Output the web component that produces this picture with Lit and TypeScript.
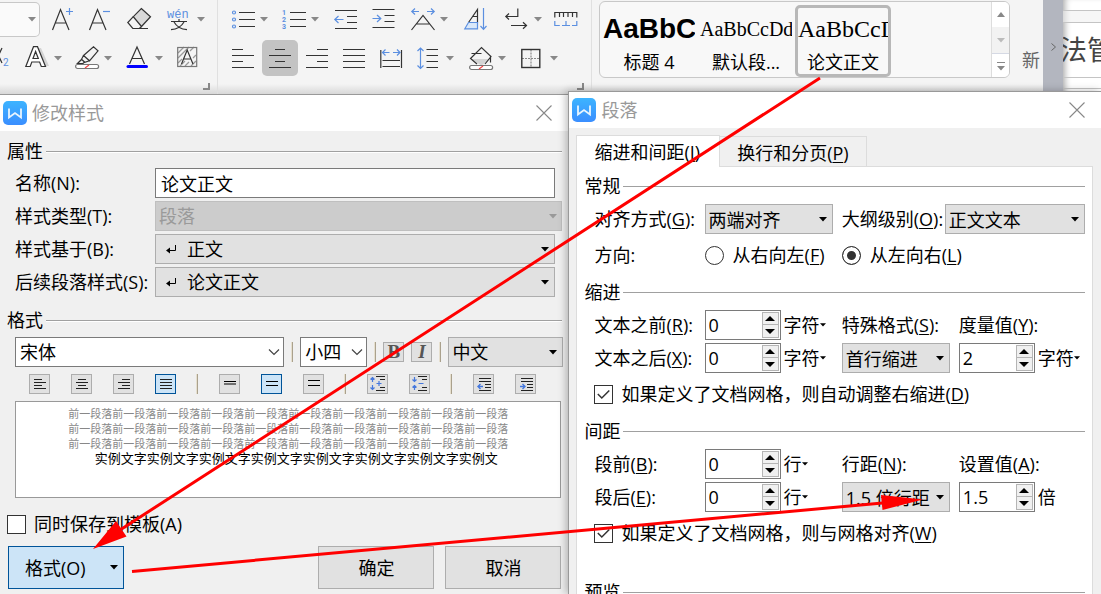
import { LitElement, html, svg, css } from "lit";
import { customElement } from "lit/decorators.js";

const caret = (cls = "") => html`<svg class="caret ${cls}" width="8" height="5" viewBox="0 0 8 5" aria-hidden="true"><path d="M0 0h8L4 4.5z" fill="currentColor" /></svg>`;

const glyph = (body: unknown, w = 24) => html`<svg width=${w} height="24" viewBox="0 0 ${w} 24" fill="none" stroke="#333" stroke-width="1.2" aria-hidden="true">${body}</svg>`;

const mini = (body: unknown) => html`<svg width="19" height="18" viewBox="0 0 19 18" fill="none" stroke="#222" stroke-width="1.2" aria-hidden="true">${body}</svg>`;

const logo = html`<svg class="logo" width="24" height="24" viewBox="0 0 24 24" aria-hidden="true">
  <defs><linearGradient id="g" x1="0" y1="0" x2="0" y2="1"><stop offset="0" stop-color="#3db4ff" /><stop offset="1" stop-color="#3a8eff" /></linearGradient></defs>
  <rect width="24" height="24" rx="5" fill="url(#g)" />
  <path d="M6 7.500v9l6-4.500 6 4.500v-9" fill="none" stroke="#e9f5ff" stroke-width="1.800" />
</svg>`;

const closeIcon = html`<svg width="16" height="16" viewBox="0 0 16 16" stroke="#888" stroke-width="1.100" aria-hidden="true"><path d="M.5.5l15 15M15.500.5l-15 15" /></svg>`;

interface Tool { name: string; art: unknown; menu?: boolean; on?: boolean }

const blue = "#5b8fe0";

const fontRow1: Tool[] = [
  { name: "增大字号", art: svg`<path d="M.5 23L8.500 2.500 17 23M3.500 16h10.500"/><path stroke=${blue} d="M14 4.500h7M17.500 1v7"/>` },
  { name: "减小字号", art: svg`<path d="M.5 23L8.500 2.500 17 23M3.500 16h10.500"/><path stroke=${blue} d="M14 4.500h7"/>` },
  { name: "清除格式", art: svg`<path d="M14.300 1.500l9.200 8.200-9 9.800-8.200-9.800z" fill="#d9d9d9"/><path d="M6.300 9.700L.8 15.500l5 6h6.500l2.300-2M6 21.500h15"/>` },
  { name: "拼音指南", menu: true, art: svg`<text x="-1" y="11" font-family="Liberation Mono" font-size="12" fill=${blue} stroke="none">wén</text><path d="M3 14.500h16M11 12v2.500M6 15q4 7 13 7.700M16 15q-4 7-13 7.700"/>` },
];

const fontRow2: Tool[] = [
  { name: "下标", art: svg`<path d="M-5 2L2 17M2 2l-7 15"/><text x="3" y="20" font-family="Roboto" font-size="10" fill=${blue} stroke="none">2</text>` },
  { name: "文字效果", menu: true, art: svg`<path d="M13 2h3l8 18h-4z" fill="#d4d4d4" stroke="none"/><path d="M.8 20.500L8.500.7h4l8 19.800h-4.200L14.600 16H6.800l-1.600 4.500zM8 12.500h5.300l-2.700-7z" fill="#fff"/>` },
  { name: "突出显示", menu: true, art: svg`<rect x=".6" y="18.500" width="23" height="4" rx="2" stroke="#777" fill="#fff"/><path stroke="#e44" d="M10 22l4-3"/><path d="M8.500 9.500L18.500.8l4.500 4-8.500 10zM8.500 9.500l-2 3.800 3.300 3 4.700-1.500M6.500 13.500L2.500 17.500h5.500l1.500-1.500"/>` },
  { name: "字体颜色", menu: true, art: svg`<path d="M3.500 18L11 1l7.500 17M6 12.500h10"/><path stroke="#00f" stroke-width="3" stroke-linecap="round" d="M2 20.500h18.500"/>` },
  { name: "字符底纹", art: svg`<path stroke="#999" d="M1 7l6-6M1 12L12 1M1 17L5 13M13 5l4-4M3 20l5-5M8 20l4-4M14 20l5-5M16 12l3-3"/><rect x=".7" y="1.500" width="19" height="19" stroke="#777"/><path d="M4.500 18L10.200 4 16 18M6.500 13h7.500"/>` },
];

const paraRow1: Tool[] = [
  { name: "项目符号", menu: true, art: svg`<path d="M8 5.500h16M8 12.500h16M8 19.500h16"/><g stroke=${blue}><circle cx="3" cy="5.500" r="1.500"/><circle cx="3" cy="12.500" r="1.500"/><circle cx="3" cy="19.500" r="1.500"/></g>` },
  { name: "编号", menu: true, art: svg`<path d="M8 5.500h16M8 12.500h16M8 19.500h16"/><g font-family="Roboto" font-weight="700" font-size="7" fill=${blue} stroke="none"><text x="0" y="8">1</text><text x="0" y="15">2</text><text x="0" y="22">3</text></g>` },
  { name: "减少缩进量", art: svg`<path d="M1 3.500h22M13 9.500h10M13 15.500h10M1 21.500h22"/><path stroke=${blue} d="M9.500 12.500H.8M4.500 9L.8 12.500l3.700 3.500"/>` },
  { name: "增加缩进量", art: svg`<path d="M.5 2.500h22M12.500 8.500h10M12.500 14.500h10M.5 20.500h22"/><path stroke=${blue} d="M.5 11.500h8.300M5 8l3.800 3.500L5 15"/>` },
  { name: "中文版式", menu: true, art: svg`<path d="M.5 23L12 8.500 23.500 23M5.500 17h13"/><path stroke=${blue} d="M8 4.500H.8M4 1.500l-3.200 3 3.200 3M16 4.500h7.200M20 1.500l3.200 3-3.200 3"/>` },
  { name: "排序", art: svg`<path d="M5 15.500h8.500v6.500H1z" fill="#d9e8fa" stroke="none"/><path d="M13.500 15.500v-13L4.500 15.500M8.500 9.500h5"/><path stroke=${blue} d="M4.500 15.500L.8 21.800h12.700v-6.300H4.500M19.500 1v21M16.500 19l3 3.300 3-3.300"/>` },
  { name: "显示段落标记", menu: true, art: svg`<path d="M12.800 1.500v8H.8M4 6.500L.8 9.500l3.200 3M6 18.500h15.500M18 15.200l3.500 3.300-3.500 3.200"/>` },
  { name: "标尺", art: svg`<path d="M.8 10.500V5.500h22v5M5.500 6v4M9.500 6v4M14 6v4M18.500 6v4"/><path stroke=${blue} d="M.8 14v4.500h5M8 18.500h8M12 14v4.500M18 18.500h4.800V14"/>` },
];

const paraRow2: Tool[] = [
  { name: "左对齐", art: svg`<path d="M1 3.500h11M1 9.500h22M1 15.500h11M1 21.500h22"/>` },
  { name: "居中对齐", on: true, art: svg`<path d="M7 3.500h10M1 9.500h22M7 15.500h10M1 21.500h22"/>` },
  { name: "右对齐", art: svg`<path d="M11 3.500h11M0 9.500h22M11 15.500h11M0 21.500h22"/>` },
  { name: "两端对齐", art: svg`<path d="M0 3.500h22M0 9.500h22M0 15.500h22M0 21.500h22"/>` },
  { name: "分散对齐", art: svg`<path d="M.8 4v18M21.500 4v18M2.500 14.500h17.500M2.500 20.500h17.500"/><path stroke=${blue} d="M9.500 6.500H2.500M5.500 3.500l-3 3 3 3M13 6.500h7M17 3.500l3 3-3 3"/>` },
  { name: "行距", menu: true, art: svg`<path d="M9.500 3.500h11.500M9.500 9.500h11.500M9.500 15.500h11.500M9.500 21.500h11.500"/><path stroke=${blue} d="M3.500 2v20.500M.5 5l3-3 3 3M.5 19.500l3 3 3-3"/>` },
  { name: "底纹颜色", menu: true, art: svg`<path d="M2 13h19l-8.500 6.500z" fill="#d4d4d4" stroke="none"/><path d="M8 18L1.500 12.500 12.500 1.500 22 10.500 16 18M2.500 7.500h10M21.500 9.500v7"/><rect x=".6" y="19.500" width="23" height="4" rx="2" stroke="#777" fill="#fff"/><path stroke="#e44" d="M10 23l4-3"/>` },
  { name: "边框", menu: true, art: svg`<path stroke="#888" stroke-dasharray="2 1" d="M1 12.500h18M10 3.500v18"/><rect x=".8" y="3.500" width="18" height="18" stroke-width="1.400"/>` },
];

const formatTools: (Tool | null)[] = [
  { name: "左对齐", art: svg`<path d="M4 4.500h8M4 7.500h12M4 10.500h8M4 13.500h12"/>` },
  { name: "居中", art: svg`<path d="M6 4.500h8M4 7.500h12M6 10.500h8M4 13.500h12"/>` },
  { name: "右对齐", art: svg`<path d="M8 4.500h8M4 7.500h12M8 10.500h8M4 13.500h12"/>` },
  { name: "两端对齐", on: true, art: svg`<path d="M4 4.500h12M4 7.500h12M4 10.500h12M4 13.500h12"/>` },
  null,
  { name: "单倍行距", art: svg`<path stroke="#000" d="M4 6.500h12M4 9h12"/>` },
  { name: "1.5 倍行距", on: true, art: svg`<path stroke="#000" d="M4 6.500h12M4 10.500h12"/>` },
  { name: "双倍行距", art: svg`<path stroke="#000" d="M4 5.500h12M4 10.500h12"/>` },
  null,
  { name: "增加段间距", art: svg`<path d="M8 1.500h9M12 4.500h5M12 12.500h5M8 15.500h9"/><path stroke="#47d" d="M4.500 2v5M2.500 4.500l2-2 2 2M4.500 10v5M2.500 12.500l2 2 2-2M8.500 8.500h5M11 6v5"/>` },
  { name: "减少段间距", art: svg`<path d="M8 1.500h9M12 4.500h5M12 12.500h5M8 15.500h9"/><path stroke="#47d" d="M4.500 2v5M2.500 4.500l2 2 2-2M4.500 10v5M2.500 12.500l2-2 2 2M8.500 8.500h5"/>` },
  null,
  { name: "减少缩进", art: svg`<path d="M5 3.500h12M5 6.500h12M11 9.500h6M11 12.500h6M5 15.500h12"/><path stroke="#47d" stroke-width="1.400" d="M9 11.500H4M6.500 9l-2.500 2.500 2.500 2.500"/>` },
  { name: "增加缩进", art: svg`<path d="M5 3.500h12M5 6.500h12M11 9.500h6M11 12.500h6M5 15.500h12"/><path stroke="#47d" stroke-width="1.400" d="M4 11.500h5M6.500 9l2.500 2.500-2.500 2.500"/>` },
];

const base = css`
  * { box-sizing: border-box; }
  button, input, select { font: inherit; color: inherit; margin: 0; }
  button { padding: 0; border: 0; background: none; }
  h1, h2, p { margin: 0; font: inherit; }
  svg { display: block; flex: none; overflow: visible; }
`;

const dialogStyles = css`
  :host { display: flex; flex-direction: column; min-width: 0; background: #f0f0f0; }
  .title { display: flex; align-items: center; height: 36px; flex: none; padding: 0 16px 0 3px; gap: 5px; background: #fff; color: #999; }
  .title h1 { flex: 1; }
  .group { display: flex; align-items: center; gap: 3px; line-height: 24px; }
  .group::after { content: ""; flex: 1; height: 1px; background: #a0a0a0; box-shadow: 0 1px #fff; }
  .pick { display: grid; align-items: center; min-width: 0; height: 30px; }
  .pick > * { grid-area: 1 / 1; }
  .pick select { appearance: none; width: 100%; height: 30px; padding: 0 16px 0 3px; border: 1px solid #adadad; border-radius: 0; background: #e1e1e1; }
  .pick .caret { justify-self: end; margin-right: 6px; pointer-events: none; }
  .pick .chevron { justify-self: end; margin-right: 4px; pointer-events: none; }
  .pick .mark { margin-left: 11px; pointer-events: none; }
  .pick.marked select { padding-left: 31px; }
  .pick.white select { background: #fff; border-color: #7a7a7a; padding-left: 4px; }
  .pick select:disabled { background: #ccc; border-color: #bfbfbf; color: #9a9a9a; opacity: 1; }
  .pick .dim { color: #999; margin-right: 5px; }
  .check { display: flex; align-items: center; gap: 8px; line-height: 24px; height: 24px; }
  .box { display: grid; place-items: center; }
  .box > * { grid-area: 1 / 1; }
  .box svg { pointer-events: none; }
  .box input { appearance: none; width: 19px; height: 19px; border: 1px solid #333; background: #fff; }
`;

@customElement("tool-row")
class ToolRow extends LitElement {
  static properties = { tools: { attribute: false } };
  declare tools: Tool[];
  static styles = [base, css`
    :host { display: grid; align-items: center; height: 36px; }
    .tool { display: flex; align-items: center; gap: 5px; justify-self: start; }
    .tool .caret { color: #888; }
    .on { width: 36px; height: 36px; justify-content: center; border-radius: 5px; background: #c3c3c3; }
  `];
  render() {
    return this.tools.map((t) => html`<button class="tool ${t.on ? "on" : ""}" aria-label=${t.name}>${glyph(t.art)}${t.menu ? caret() : ""}</button>`);
  }
}

@customElement("app-ribbon")
class AppRibbon extends LitElement {
  static styles = [base, css`
    :host { display: flex; box-sizing: border-box; height: 95px; border-bottom: 1px solid #999; background: linear-gradient(#f4f4f4 84px, #d8d8d8 94px); overflow: hidden; }
    .set { display: flex; flex-direction: column; gap: 3px; padding-top: 1px; flex: none; position: relative; border-right: 1px solid #e0e0e0; }
    .font { width: 218px; }
    .para { width: 374px; padding-left: 13px; }
    .line { display: flex; }
    .size { appearance: none; width: 40px; height: 35px; border: 1px solid #c8c8c8; border-left: 0; border-radius: 0 5px 5px 0; background: #fafafa; }
    .sizebox { display: grid; align-items: center; width: 52px; }
    .sizebox > * { grid-area: 1 / 1; }
    .sizebox .caret { margin-left: 28px; color: #888; pointer-events: none; }
    .f1 { grid-template-columns: 37px 38px 41px 37px; }
    .f2 { grid-template-columns: 25px 50px 51px 51px 24px; }
    .p1 { grid-template-columns: 51px 52px 38px 39px 53px 41px 49px 24px; }
    .p2 { grid-template-columns: 31px 44px 37px 37px 37px 52px 52px 36px; }
    .launch { position: absolute; right: 7px; bottom: 4px; width: 7px; height: 7px; border: solid #888; border-width: 0 2px 2px 0; }
    .gallery { display: flex; flex: none; height: 77px; width: 411px; margin: 1px 0 0 7px; border: 1px solid #c8c8c8; border-radius: 6px; background: #f8f8f8; overflow: hidden; }
    .cards { display: flex; flex: 1; gap: 3px; padding: 3px 0 0 1px; color: #000; }
    .card { display: flex; flex-direction: column; width: 94px; height: 72px; padding: 3px 0 0 2px; border-radius: 5px; overflow: hidden; text-align: left; }
    .card.on { border: 3px solid #b8b8b8; padding: 0; width: 96px; }
    .sample { height: 42px; line-height: 42px; overflow: hidden; white-space: nowrap; font-family: "Liberation Serif", serif; font-size: 20px; }
    .sample.big { font: 700 28px/42px "Liberation Sans", sans-serif; }
    .sample.mid { font-size: 24px; }
    .name { line-height: 24px; text-align: center; white-space: nowrap; }
    .scroll { display: grid; grid-template-rows: 25px 27px 24px; width: 18px; border-left: 1px solid #ddd; color: #888; }
    .scroll button { display: grid; place-items: center; background: #fff; }
    .scroll button + button { background: #f2f2f2; border-bottom: 1px solid #d5d9e4; color: #bbb; }
    .scroll button:last-child { background: #fff; color: #888; border: 0; }
    .new { width: 33px; flex: none; padding: 26px 0 0 12px; line-height: 24px; color: #666; overflow: hidden; white-space: nowrap; text-align: left; }
    .more { width: 20px; flex: none; display: grid; place-items: center; background: #b3b6bf; }
    .behind { flex: 1; min-width: 0; display: grid; grid-template-rows: 11px 12px 55px 11px 1fr; background: #fff; overflow: hidden; box-shadow: inset 6px 0 6px -4px #aaa; white-space: nowrap; }
    .behind > * { border-bottom: 1px solid #c4c4c4; }
    .stripe { background: #eee8; }
    .behind p { font-size: 27px; line-height: 54px; color: #444; text-indent: -3px; }
  `];
  render() {
    return html`
      <div class="set font">
        <div class="line">
          <span class="sizebox"><select class="size" aria-label="字号"><option></option></select>${caret()}</span>
          <tool-row class="f1" .tools=${fontRow1}></tool-row>
        </div>
        <tool-row class="f2" .tools=${fontRow2}></tool-row>
        <span class="launch"></span>
      </div>
      <div class="set para">
        <tool-row class="p1" .tools=${paraRow1}></tool-row>
        <tool-row class="p2" .tools=${paraRow2}></tool-row>
        <span class="launch"></span>
      </div>
      <div class="gallery">
        <div class="cards">
          <button class="card"><span class="sample big">AaBbC</span><span class="name">标题 4</span></button>
          <button class="card"><span class="sample">AaBbCcDd</span><span class="name">默认段...</span></button>
          <button class="card on"><span class="sample mid">AaBbCcD</span><span class="name">论文正文</span></button>
        </div>
        <div class="scroll">
          <button aria-label="上一行"><svg width="8" height="5"><path d="M0 5h8L4 0z" fill="currentColor" /></svg></button>
          <button aria-label="下一行">${caret()}</button>
          <button aria-label="更多样式"><svg width="8" height="9"><path d="M0 0h8v1H0zM0 4h8L4 8.500z" fill="currentColor" /></svg></button>
        </div>
      </div>
      <button class="new">新</button>
      <button class="more" aria-label="展开"><svg width="5" height="8" fill="none" stroke="#666"><path d="M.5.5L4.500 4 .5 7.500" /></svg></button>
      <div class="behind"><span></span><span class="stripe"></span><p>法管</p><span></span></div>
    `;
  }
}

@customElement("style-dialog")
class StyleDialog extends LitElement {
  static styles = [base, dialogStyles, css`
    .body { display: flex; flex-direction: column; padding: 8px 6px 5px 7px; }
    .fields { display: grid; grid-template-columns: 140px minmax(0, 1fr); gap: 3px 0; align-items: center; margin: 5px 0 11px; padding-left: 8px; white-space: nowrap; }
    .short { margin-right: 7px; }
    .text { height: 30px; min-width: 0; padding: 0 5px; border: 1px solid #7a7a7a; background: #fff; }
    .bar { display: flex; align-items: center; gap: 7px; margin: 5px 0 7px; padding-left: 8px; }
    .face { flex: 269 1 0; }
    .pt { flex: 67 1 0; }
    .lang { flex: 114 1 0; }
    .sep { width: 1px; height: 20px; background: #aaa18d; box-shadow: -1px 0 #e6dfce; }
    .bar .sep { width: 2px; box-shadow: none; border-left: 1px solid #e6dfce; }
    .sq { display: grid; place-items: center; width: 21px; height: 20px; border: 1px solid #adadad; background: #e1e1e1; }
    .sq.on { border-color: #005499; background: #cce4f7; }
    .letter { font: 700 19px/18px "Liberation Serif", serif; color: #555; }
    .italic { font-style: italic; }
    .tools { display: flex; gap: 21px; padding-left: 22px; }
    .preview { height: 97px; margin: 7px 1px 14px 8px; padding: 4px 0 0; border: 1px solid #999; background: #fff; overflow: hidden; white-space: nowrap; text-align: center; font-size: 11px; line-height: 15px; color: #888; }
    .preview .now { font-size: 13px; color: #000; padding-left: 16px; }
    .actions { display: flex; gap: 11px; margin: 10px 1px 0; }
    .act { flex: 0 1 116px; height: 43px; border: 1px solid #adadad; background: #e1e1e1; }
    .menu { display: flex; align-items: center; justify-content: space-between; padding: 0 5px 0 16px; margin-right: auto; border-color: #005499; background: #cce4f7; }
  `];
  render() {
    const mark = html`<svg class="mark" width="11" height="9" viewBox="0 0 11 9" fill="none" stroke="#000"><path d="M9.500 0v5.500H2" /><path d="M0 5.500l4-3v6z" fill="#000" stroke="none" /></svg>`;
    const chevron = html`<svg class="chevron" width="12" height="7" viewBox="0 0 12 7" fill="none" stroke="#444" stroke-width="1.200"><path d="M1 .5l5 5 5-5" /></svg>`;
    const line = "前一段落".repeat(10);
    return html`
      <header class="title">${logo}<h1>修改样式</h1><button aria-label="关闭">${closeIcon}</button></header>
      <div class="body">
        <h2 class="group">属性</h2>
        <div class="fields">
          <label for="name">名称(N):</label>
          <input id="name" class="text short" .value=${"论文正文"} />
          <label for="type">样式类型(T):</label>
          <span class="pick"><select id="type" disabled><option>段落</option></select>${caret("dim")}</span>
          <label for="based">样式基于(B):</label>
          <span class="pick marked short"><select id="based"><option>正文</option></select>${mark}${caret()}</span>
          <label for="next">后续段落样式(S):</label>
          <span class="pick marked short"><select id="next"><option>论文正文</option></select>${mark}${caret()}</span>
        </div>
        <h2 class="group">格式</h2>
        <div class="bar">
          <span class="pick white face"><select aria-label="字体"><option>宋体</option></select>${chevron}</span>
          <i class="sep"></i>
          <span class="pick white pt"><select aria-label="字号"><option>小四</option></select>${chevron}</span>
          <i class="sep"></i>
          <button class="sq letter">B</button>
          <button class="sq letter italic">I</button>
          <i class="sep"></i>
          <span class="pick lang"><select aria-label="语言"><option>中文</option></select>${caret()}</span>
        </div>
        <div class="tools">
          ${formatTools.map((t) => t ? html`<button class="sq ${t.on ? "on" : ""}" aria-label=${t.name}>${mini(t.art)}</button>` : html`<i class="sep"></i>`)}
        </div>
        <div class="preview"><p>${line}</p><p>${line}</p><p>${line}</p><p class="now">${"实例文字".repeat(7)}实例文</p></div>
        <label class="check"><span class="box"><input type="checkbox" /></span>同时保存到模板(A)</label>
        <div class="actions">
          <button class="act menu">格式(O)${caret()}</button>
          <button class="act">确定</button>
          <button class="act">取消</button>
        </div>
      </div>
    `;
  }
}

@customElement("paragraph-dialog")
class ParagraphDialog extends LitElement {
  static styles = [base, dialogStyles, css`
    u { text-underline-offset: 2px; text-decoration-thickness: 1px; }
    .body { flex: 1; display: flex; flex-direction: column; min-height: 0; padding: 7px 8px 0 7px; }
    .tabs { display: flex; align-items: flex-end; }
    .tab { height: 30px; padding: 2px 17px 0 17px; border: 1px solid #dcdcdc; border-bottom: 0; border-left: 0; background: #f0f0f0; white-space: nowrap; }
    .tab.on { height: 32px; margin-bottom: -1px; padding: 0 19px 0 17px; border-left: 1px solid #dcdcdc; background: #fff; position: relative; }
    .page { flex: 1; padding: 7px 7px 0; border: 1px solid #dcdcdc; background: #fff; }
    .grid { display: grid; grid-template-columns: 110fr 137fr 117fr 126fr; gap: 3px 0; align-items: center; padding-left: 10px; margin-top: 6px; white-space: nowrap; }
    .grid > * { min-width: 0; min-height: 30px; line-height: 30px; }
    .grid.wide { grid-template-columns: 110fr 137fr 103fr 140fr; }
    .in { margin-right: 9px; }
    .dir { display: grid; grid-template-columns: 110fr 137fr 243fr; align-items: center; padding-left: 10px; margin-top: 9px; line-height: 24px; white-space: nowrap; }
    .radio { display: flex; align-items: center; gap: 9px; height: 24px; }
    .radio input { appearance: none; width: 19px; height: 19px; border: 1px solid #333; border-radius: 50%; background: #fff; }
    .radio input:checked { background: #333; box-shadow: inset 0 0 0 4px #fff; }
    .check { margin: 9px 0 13px; padding-left: 10px; white-space: nowrap; }
    .last { margin-bottom: 35px; }
    .dir + .group { margin-top: 13px; }
    .num { display: flex; align-items: center; gap: 3px; }
    .spin { display: flex; width: 76px; height: 30px; padding: 1px; border: 1px solid #7a7a7a; background: #fff; }
    .spin input { appearance: textfield; flex: 1; min-width: 0; padding: 0 0 0 2px; border: 0; background: none; outline: 0; }
    .spin input::-webkit-inner-spin-button { display: none; }
    .arrows { display: grid; grid-template-rows: 1fr 1fr; width: 17px; }
    .arrows button { display: grid; place-items: center; border: 1px solid #b5b5b5; background: #f0f0f0; }
    .arrows button + button { border-top: 0; }
    .unit { display: flex; align-items: center; }
    .unit .tiny { width: 6px; height: 4px; }
  `];
  spinner(id: string, value: string, unit: string, menu = true, label = "") {
    return html`<span class="num"><span class="spin">
      <input id=${id} type="number" step="0.5" .value=${value} aria-label=${label || id} />
      <span class="arrows">
        <button aria-label="增加"><svg width="10" height="5"><path d="M0 5h10L5 0z" /></svg></button>
        <button aria-label="减少"><svg width="10" height="5"><path d="M0 0h10L5 5z" /></svg></button>
      </span></span><span class="unit">${unit}${menu ? caret("tiny") : ""}</span></span>`;
  }
  key(text: string, k: string) {
    return html`${text}(<u>${k}</u>)`;
  }
  checkRow(text: string, k: string, cls = "") {
    return html`<label class="check ${cls}"><span class="box"><input type="checkbox" checked />
      <svg width="13" height="9" viewBox="0 0 13 9" fill="none" stroke="#333" stroke-width="1.500"><path d="M.8 4l4 4 7.500-7.500" /></svg></span><span>${this.key(text, k)}</span></label>`;
  }
  render() {
    return html`
      <header class="title">${logo}<h1>段落</h1><button aria-label="关闭">${closeIcon}</button></header>
      <div class="body">
        <div class="tabs" role="tablist">
          <button class="tab on" role="tab" aria-selected="true">${this.key("缩进和间距", "I")}</button>
          <button class="tab" role="tab" aria-selected="false">${this.key("换行和分页", "P")}</button>
        </div>
        <div class="page" role="tabpanel">
          <h2 class="group">常规</h2>
          <div class="grid wide">
            <label for="align">${this.key("对齐方式", "G")}:</label>
            <span class="pick in"><select id="align"><option>两端对齐</option></select>${caret()}</span>
            <label for="level">${this.key("大纲级别", "O")}:</label>
            <span class="pick"><select id="level"><option>正文文本</option></select>${caret()}</span>
          </div>
          <div class="dir">
            <span>方向:</span>
            <label class="radio"><input type="radio" name="dir" /><span>${this.key("从右向左", "F")}</span></label>
            <label class="radio"><input type="radio" name="dir" checked /><span>${this.key("从左向右", "L")}</span></label>
          </div>
          <h2 class="group">缩进</h2>
          <div class="grid">
            <label for="before">${this.key("文本之前", "R")}:</label>
            ${this.spinner("before", "0", "字符", true, "文本之前")}
            <label for="special">${this.key("特殊格式", "S")}:</label>
            <label for="measure">${this.key("度量值", "Y")}:</label>
            <label for="after">${this.key("文本之后", "X")}:</label>
            ${this.spinner("after", "0", "字符", true, "文本之后")}
            <span class="pick in"><select id="special"><option>首行缩进</option></select>${caret()}</span>
            ${this.spinner("measure", "2", "字符", true, "度量值")}
          </div>
          ${this.checkRow("如果定义了文档网格，则自动调整右缩进", "D")}
          <h2 class="group">间距</h2>
          <div class="grid">
            <label for="above">${this.key("段前", "B")}:</label>
            ${this.spinner("above", "0", "行", true, "段前")}
            <label for="spacing">${this.key("行距", "N")}:</label>
            <label for="setting">${this.key("设置值", "A")}:</label>
            <label for="below">${this.key("段后", "E")}:</label>
            ${this.spinner("below", "0", "行", true, "段后")}
            <span class="pick in"><select id="spacing"><option>1.5 倍行距</option></select>${caret()}</span>
            ${this.spinner("setting", "1.5", "倍", false, "设置值")}
          </div>
          ${this.checkRow("如果定义了文档网格，则与网格对齐", "W", "last")}
          <h2 class="group">预览</h2>
        </div>
      </div>
    `;
  }
}

@customElement("app-root")
class AppRoot extends LitElement {
  static styles = css`
    :host { display: flex; flex-direction: column; position: relative; height: 100vh; overflow: hidden; background: #f0f0f0; color: #000; font: 18px/24px "Open Sans", "Noto Sans CJK SC", sans-serif; }
    .desk { display: flex; flex: 1; min-height: 0; }
    .left { flex: 569 1 0; }
    .right { flex: 532 1 0; margin-top: -4px; border: solid #999; border-width: 1px 0 0 1px; box-shadow: -2px 0 8px #0004; z-index: 1; }
    .notes { position: absolute; inset: 0; z-index: 2; pointer-events: none; }
  `;
  render() {
    return html`
      <app-ribbon></app-ribbon>
      <main class="desk">
        <style-dialog class="left"></style-dialog>
        <paragraph-dialog class="right"></paragraph-dialog>
      </main>
      <svg class="notes" width="100%" height="100%" viewBox="0 0 1101 594" preserveAspectRatio="xMinYMin meet" stroke="#f00" stroke-width="3" fill="#f00" aria-hidden="true">
        <path d="M820 78L120 530M132 571.500L888 502.500" />
        <path d="M93 549L116 521 126.500 536.500zM923 499.500L881 495 882.500 510z" stroke="none" />
      </svg>
    `;
  }
}
